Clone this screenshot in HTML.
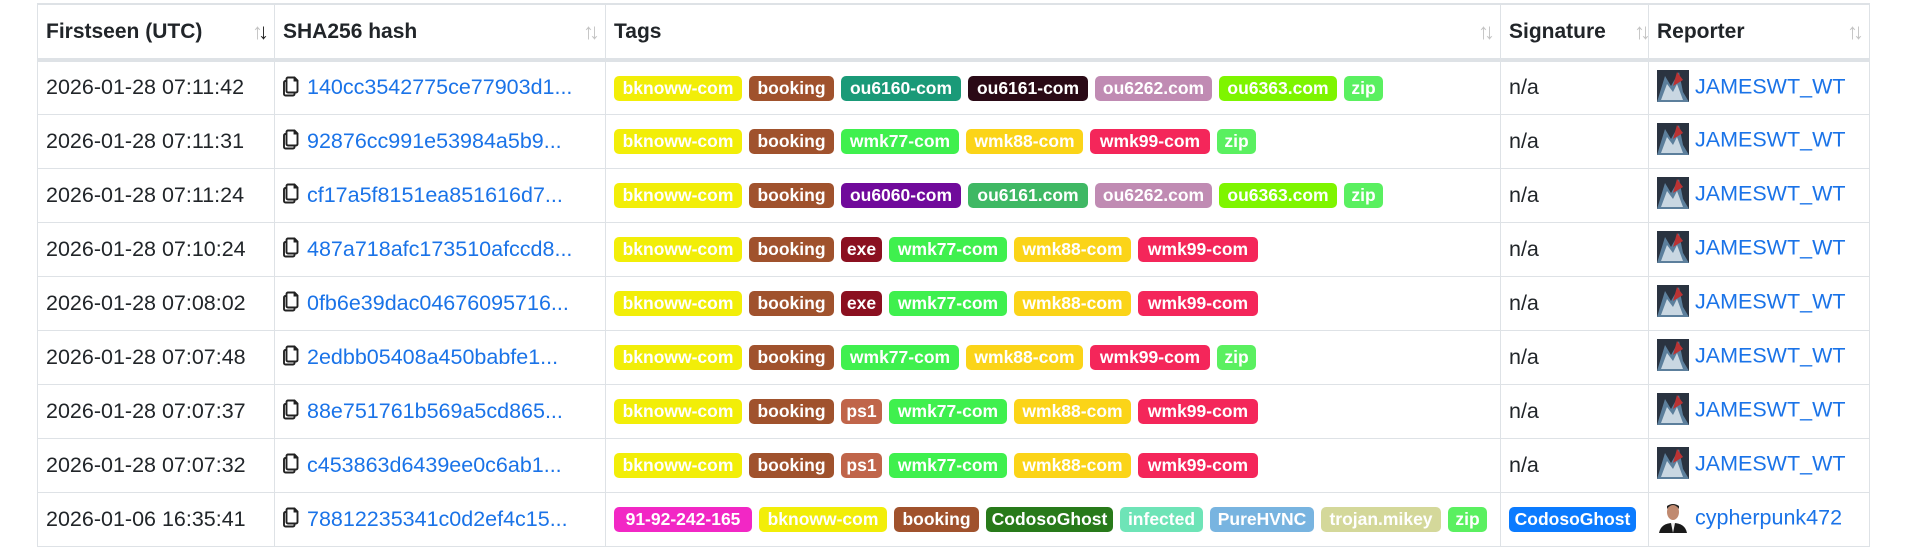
<!DOCTYPE html>
<html><head><meta charset="utf-8"><style>
*{box-sizing:border-box;margin:0;padding:0}
body{width:1915px;height:548px;background:#fff;font-family:"Liberation Sans",sans-serif;color:#212529;overflow:hidden;position:relative}
table{position:absolute;left:37px;top:3px;border-collapse:collapse;table-layout:fixed;width:1832px}
td,th{border:1px solid #dee2e6;padding:0 0 0 8px;white-space:nowrap;overflow:hidden;vertical-align:middle}
table{border-top:2px solid #dee2e6}
th{height:56px;font-weight:bold;font-size:21px;text-align:left;border-bottom:4px solid #dee2e6;position:relative}
th .s{position:absolute;right:10px;top:14px;font-size:22px;color:#bbb;font-weight:normal;letter-spacing:-5px}
th .s b{color:#c4c4c4;font-weight:normal}
th .s.a b.d{color:#222}
td{height:54px;font-size:21.5px}
a{color:#1a73e8;text-decoration:none}
.t{display:inline-block;height:25px;line-height:25px;border-radius:5px;color:#fff;font-weight:bold;font-size:17.5px;text-align:center;margin-right:7px;vertical-align:middle;overflow:hidden}
.cp{display:inline-block;vertical-align:middle;margin-right:8px;margin-top:-4px}
.av{display:inline-block;width:32px;height:32px;vertical-align:middle;margin-right:6px;margin-top:-4px}
</style></head><body>
<table>
<colgroup><col style="width:237px"><col style="width:331px"><col style="width:895px"><col style="width:148px"><col style="width:221px"></colgroup>
<tr><th>Firstseen (UTC)<span class="s a"><b>↑</b><b class="d">↓</b></span></th><th>SHA256 hash<span class="s"><b>↑</b><b>↓</b></span></th><th>Tags<span class="s"><b>↑</b><b>↓</b></span></th><th>Signature<span class="s" style="right:2px"><b>↑</b><b>↓</b></span></th><th>Reporter<span class="s"><b>↑</b><b>↓</b></span></th></tr>
</table>
<script>
var Y='#f2ee08',B='#a0522d',Z='#5af060',W7='#3ff04e',W8='#fbd418',W9='#f4265a',E='#8b1020',P='#c0654a';
var rows=[
['2026-01-28 07:11:42','140cc3542775ce77903d1...',[['bknoww-com',Y,128],['booking',B,85],['ou6160-com','#1a9a78',120],['ou6161-com','#2a0a16',120],['ou6262.com','#c08bb3',117],['ou6363.com','#7ef500',118],['zip',Z,39]]],
['2026-01-28 07:11:31','92876cc991e53984a5b9...',[['bknoww-com',Y,128],['booking',B,85],['wmk77-com',W7,118],['wmk88-com',W8,117],['wmk99-com',W9,120],['zip',Z,39]]],
['2026-01-28 07:11:24','cf17a5f8151ea851616d7...',[['bknoww-com',Y,128],['booking',B,85],['ou6060-com','#700a9b',120],['ou6161.com','#3fb864',120],['ou6262.com','#c08bb3',117],['ou6363.com','#7ef500',118],['zip',Z,39]]],
['2026-01-28 07:10:24','487a718afc173510afccd8...',[['bknoww-com',Y,128],['booking',B,85],['exe',E,41],['wmk77-com',W7,118],['wmk88-com',W8,117],['wmk99-com',W9,120]]],
['2026-01-28 07:08:02','0fb6e39dac04676095716...',[['bknoww-com',Y,128],['booking',B,85],['exe',E,41],['wmk77-com',W7,118],['wmk88-com',W8,117],['wmk99-com',W9,120]]],
['2026-01-28 07:07:48','2edbb05408a450babfe1...',[['bknoww-com',Y,128],['booking',B,85],['wmk77-com',W7,118],['wmk88-com',W8,117],['wmk99-com',W9,120],['zip',Z,39]]],
['2026-01-28 07:07:37','88e751761b569a5cd865...',[['bknoww-com',Y,128],['booking',B,85],['ps1',P,41],['wmk77-com',W7,118],['wmk88-com',W8,117],['wmk99-com',W9,120]]],
['2026-01-28 07:07:32','c453863d6439ee0c6ab1...',[['bknoww-com',Y,128],['booking',B,85],['ps1',P,41],['wmk77-com',W7,118],['wmk88-com',W8,117],['wmk99-com',W9,120]]],
['2026-01-06 16:35:41','78812235341c0d2ef4c15...',[['91-92-242-165','#f227c5',138],['bknoww-com',Y,128],['booking',B,85],['CodosoGhost','#287a1a',127],['infected','#6ee4b7',83],['PureHVNC','#78b4e0',104],['trojan.mikey','#d4d89a',120],['zip',Z,39]]]
];
var cp='<svg class="cp" width="16" height="21" viewBox="0 0 16 21"><path d="M5 1.5h6.5l3 3V15a1.5 1.5 0 0 1-1.5 1.5H5A1.5 1.5 0 0 1 3.5 15V3A1.5 1.5 0 0 1 5 1.5z M11.5 1.5v3h3 M3.5 5H2.5A1.5 1.5 0 0 0 1 6.5V18a1.5 1.5 0 0 0 1.5 1.5H10A1.5 1.5 0 0 0 11.5 18v-1.5" fill="none" stroke="#222" stroke-width="1.9"/></svg>';
var av1='<svg class="av" viewBox="0 0 32 32"><rect width="32" height="32" fill="#2a3340"/><path d="M0 32L8 6l6 10 8-14 4 20 6 10z" fill="#5c7f9c"/><path d="M4 30l6-16 6 8 4-8 6 16z" fill="#c9d7e2"/><path d="M20 2l6 8-10 6z" fill="#b33"/></svg>';
var av2='<svg class="av" viewBox="0 0 32 32"><rect width="32" height="32" fill="#fff"/><ellipse cx="16" cy="11" rx="6" ry="8" fill="#c08a70"/><path d="M10 8q6-8 12 0v-3q-6-4-12 0z" fill="#222"/><path d="M2 32q2-10 14-10t14 10z" fill="#1a1a1a"/><path d="M14 22l2 10 2-10z" fill="#eee"/></svg>';
var t=document.querySelector('table'),h='';
rows.forEach(function(r,i){
 var tags=r[2].map(function(g){return '<span class="t" style="background:'+g[1]+';width:'+g[2]+'px">'+g[0]+'</span>'}).join('');
 var last=i==8;
 h+='<tr><td>'+r[0]+'</td><td>'+cp+'<a>'+r[1]+'</a></td><td>'+tags+'</td><td>'+(last?'<span class="t" style="background:#0b7bff;width:127px">CodosoGhost</span>':'n/a')+'</td><td>'+(last?av2+'<a>cypherpunk472</a>':av1+'<a>JAMESWT_WT</a>')+'</td></tr>';
});
t.insertAdjacentHTML('beforeend',h);
</script>
</body></html>
